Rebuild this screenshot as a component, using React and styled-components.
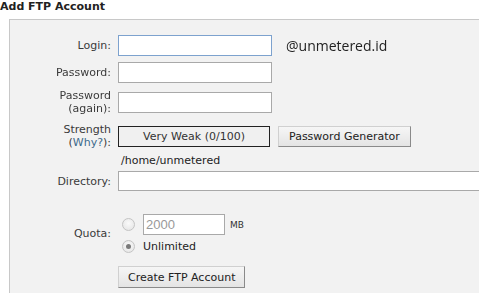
import styled, { createGlobalStyle } from "styled-components";

const GlobalStyle = createGlobalStyle`
  html, body {
    margin: 0;
    padding: 0;
    background: #fff;
    overflow: hidden;
  }
  body {
    font-family: "DejaVu Sans", Verdana, sans-serif;
    font-size: 11px;
    color: #333;
  }
`;

const Page = styled.div`
  width: 479px;
  height: 293px;
  overflow: hidden;
`;

const Title = styled.h3`
  margin: 0;
  height: 19px;
  font-size: 11px;
  font-weight: bold;
  line-height: 13px;
  color: #222;
`;

const Panel = styled.div`
  margin-left: 9px;
  width: 520px;
  background: #f2f2f2;
  border: 1px solid #c8c8c8;
  padding: 15px 0 20px 0;
`;

const Row = styled.div`
  display: flex;
  align-items: center;
  margin-top: ${(p) => p.$mt || 0}px;
`;

const Label = styled.div`
  width: 101px;
  flex: none;
  margin-right: 7px;
  text-align: right;
  line-height: 13px;
  color: #3a3a3a;
`;

const WhyLink = styled.a`
  color: #3d6b8c;
  text-decoration: none;
`;

const TextInput = styled.input`
  box-sizing: border-box;
  flex: none;
  width: ${(p) => p.$w || 154}px;
  height: ${(p) => p.$h || 21}px;
  margin: 0;
  padding: 0 2px;
  border: 1px solid ${(p) => (p.$focus ? "#7da2ce" : "#a9a9a9")};
  background: #fff;
  font-family: "Liberation Sans", Arial, sans-serif;
  font-size: 13px;
  color: #999;
  outline: none;
  caret-color: #000;
`;

const Domain = styled.span`
  margin-left: 14px;
  font-family: "Open Sans", sans-serif;
  font-size: 14px;
  color: #222;
`;

const StrengthBox = styled.div`
  box-sizing: border-box;
  width: 152px;
  height: 21px;
  border: 1px solid #222;
  background: #f0f0f0;
  text-align: center;
  line-height: 19px;
  color: #333;
`;

const Button = styled.button`
  box-sizing: border-box;
  height: ${(p) => p.$h || 21}px;
  margin: 0 0 0 ${(p) => p.$ml || 0}px;
  padding: 0 ${(p) => p.$px || 8}px;
  font-family: "DejaVu Sans", Verdana, sans-serif;
  font-size: 11px;
  color: #222;
  background: linear-gradient(#f6f6f6, #e4e4e4);
  border: 1px solid;
  border-color: #d0d0d0 #8a8a8a #8a8a8a #d0d0d0;
  border-radius: 0;
`;

const Path = styled.div`
  padding-left: 3px;
  line-height: 13px;
  color: #222;
`;

const Stack = styled.div`
  display: flex;
  flex-direction: column;
`;

const Option = styled.div`
  display: flex;
  align-items: center;
  margin-top: ${(p) => p.$mt || 0}px;
`;

const Radio = styled.span`
  box-sizing: border-box;
  flex: none;
  width: 13px;
  height: 13px;
  margin: 0 8px 0 4px;
  border-radius: 50%;
  border: 1px solid #c4c4c4;
  background: radial-gradient(circle at 50% 40%, #fafafa, #e2e2e2);
  display: flex;
  align-items: center;
  justify-content: center;
  &::after {
    content: "";
    display: ${(p) => (p.$checked ? "block" : "none")};
    width: 5px;
    height: 5px;
    border-radius: 50%;
    background: #7a7a7a;
  }
`;

const Unit = styled.span`
  margin-left: 5px;
  font-size: 9px;
  color: #333;
`;

const OptionText = styled.span`
  color: #222;
`;

export default function App() {
  return (
    <Page>
      <GlobalStyle />
      <Title>Add FTP Account</Title>
      <Panel>
        <Row>
          <Label>Login:</Label>
          <TextInput $focus autoFocus />
          <Domain>@unmetered.id</Domain>
        </Row>
        <Row $mt={6}>
          <Label>Password:</Label>
          <TextInput type="password" />
        </Row>
        <Row $mt={6}>
          <Label>
            Password
            <br />
            (again):
          </Label>
          <TextInput type="password" />
        </Row>
        <Row $mt={8}>
          <Label>
            Strength
            <br />
            (<WhyLink href="#">Why?</WhyLink>):
          </Label>
          <StrengthBox>Very Weak (0/100)</StrengthBox>
          <Button $ml={8} $px={10}>Password Generator</Button>
        </Row>
        <Row $mt={5}>
          <Label />
          <Path>/home/unmetered</Path>
        </Row>
        <Row $mt={4}>
          <Label>Directory:</Label>
          <TextInput $w={380} $h={20} />
        </Row>
        <Row $mt={23}>
          <Label>Quota:</Label>
          <Stack>
            <Option>
              <Radio />
              <TextInput $w={82} defaultValue="2000" />
              <Unit>MB</Unit>
            </Option>
            <Option $mt={5}>
              <Radio $checked />
              <OptionText>Unlimited</OptionText>
            </Option>
          </Stack>
        </Row>
        <Row $mt={13}>
          <Label />
          <Button $h={22} $px={9}>Create FTP Account</Button>
        </Row>
      </Panel>
    </Page>
  );
}
